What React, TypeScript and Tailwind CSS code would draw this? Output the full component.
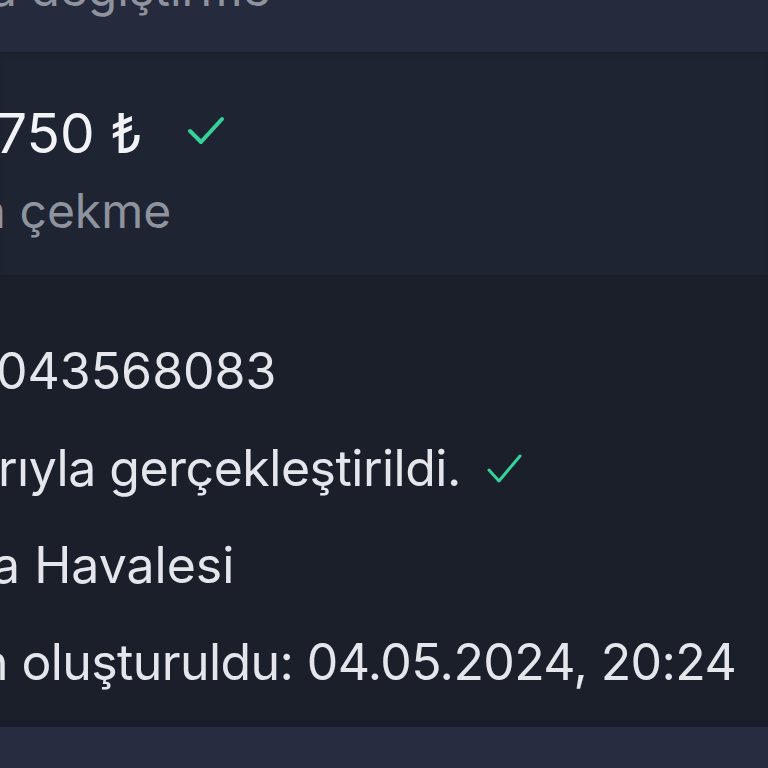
import React from "react"

// Küçük onay işareti
const Tick = ({ w, h, sw, d }: { w: number; h: number; sw: number; d: string }) => (
  <svg width={w} height={h} viewBox={`0 0 ${w} ${h}`} fill="none" className="shrink-0">
    <path d={d} stroke="#34d399" strokeWidth={sw} strokeLinecap="round" strokeLinejoin="round" />
  </svg>
)

const rows = [
  { text: "043568083", cls: "ml-[-4px]" },
  { text: "rıyla gerçekleştirildi.", cls: "ml-[-2px] tracking-[-0.5px]", tick: true },
  { text: "a Havalesi", cls: "ml-[-8px]" },
  { text: "n oluşturuldu: 04.05.2024, 20:24", cls: "ml-[-21px] tracking-[-0.6px]" },
]

export default function App() {
  return (
    <div
      className="h-[768px] w-[768px] overflow-hidden bg-[#262d41]"
      style={{ fontFamily: "Inter, 'Noto Sans', sans-serif" }}
    >
      {/* üst şerit */}
      <div className="h-[52px] overflow-hidden bg-[#252b3c]">
        <div className="ml-[-10px] mt-[-39px] whitespace-nowrap text-[48px] leading-[56px] text-[#8e939e]">
          a değiştirme
        </div>
      </div>

      {/* tutar */}
      <div className="h-[223px] overflow-hidden bg-[#1f2433] pt-[49px] shadow-[inset_0_4px_6px_-2px_rgba(0,0,0,0.15)]">
        <div className="ml-[-4px] flex items-center whitespace-nowrap">
          <span className="text-[55px] leading-[64px] text-[#f1f3f6]">750 ₺</span>
          <span className="ml-[44px] mt-[-4px]">
            <Tick w={38} h={30} sw={4} d="M3 15 L14 26 L35 3" />
          </span>
        </div>
        <div className="ml-[-21px] mt-[18px] whitespace-nowrap text-[48px] leading-[56px] text-[#8e939e]">
          a çekme
        </div>
      </div>

      {/* detaylar */}
      <div className="h-[445px] overflow-hidden bg-[#1b1f2a] pt-[48px]">
        {rows.map((r) => (
          <div
            key={r.text}
            className={`${r.cls} flex items-center whitespace-nowrap text-[50px] leading-[97px] text-[#e4e6ec]`}
          >
            <span>{r.text}</span>
            {r.tick && (
              <span className="ml-[26px]">
                <Tick w={36} h={32} sw={3} d="M2 17 L12 28 L33 3" />
              </span>
            )}
          </div>
        ))}
      </div>
      <div className="h-[7px] bg-[#191c2b]" />
    </div>
  )
}
